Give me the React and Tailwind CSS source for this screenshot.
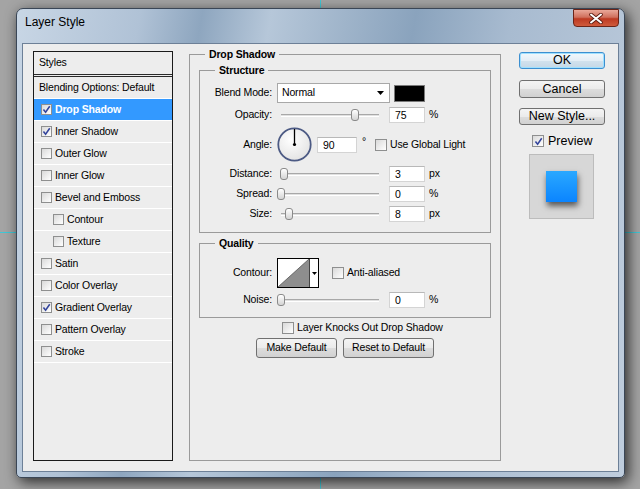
import React from "react"

const styleRows = [
  { label: "Drop Shadow", on: true, active: true },
  { label: "Inner Shadow", on: true },
  { label: "Outer Glow" },
  { label: "Inner Glow" },
  { label: "Bevel and Emboss" },
  { label: "Contour", sub: true },
  { label: "Texture", sub: true },
  { label: "Satin" },
  { label: "Color Overlay" },
  { label: "Gradient Overlay", on: true },
  { label: "Pattern Overlay" },
  { label: "Stroke" },
]

function Box({ on, className = "w-[11px] h-[11px]" }) {
  return (
    <span className={`${className} shrink-0 border border-[#8e8f8f] bg-[linear-gradient(135deg,#d9d9d9,#ffffff)] flex items-center justify-center`}>
      {on && (
        <svg viewBox="0 0 10 10" className="w-[9px] h-[9px]">
          <path d="M1.6 5 L4 8 L8.6 1.4" fill="none" stroke="#33449c" strokeWidth="1.7" />
        </svg>
      )}
    </span>
  )
}

function Slider({ v }) {
  return (
    <div className="relative w-[106px] h-[16px]">
      <div className="absolute left-[4px] right-[4px] top-[7px] h-[3px] border-t border-[#a8a8a8] border-b border-b-white bg-[#e0e0e0]" />
      <div
        className="absolute top-[2px] w-[8px] h-[12px] rounded-[3px] border border-[#8a8a8a] bg-gradient-to-b from-white to-[#d4d4d4]"
        style={{ left: Math.round(v * 0.98) }}
      />
    </div>
  )
}

function Field({ v }) {
  return (
    <div className="w-[36px] h-[16px] bg-white border border-[#d4d4d4] border-t-[#b8b8b8] pl-[5px] leading-[15px]">
      {v}
    </div>
  )
}

function SliderRow({ label, v, unit }) {
  return (
    <div className="flex items-center h-[16px]">
      <span className="w-[72px] text-right">{label}</span>
      <div className="ml-[5px]"><Slider v={v} /></div>
      <div className="ml-[6px]"><Field v={v} /></div>
      <span className="ml-[4px]">{unit}</span>
    </div>
  )
}

function Button({ children, className }) {
  return (
    <div className={`${className} flex items-center justify-center rounded-[3px] border border-[#707070] bg-[linear-gradient(#f4f4f4,#ebebeb_50%,#dddddd_51%,#d1d1d1)]`}>
      {children}
    </div>
  )
}

export default function App() {
  return (
    <div className="relative w-[640px] h-[489px] overflow-hidden bg-[#a4a4a4] pt-[8px] pl-[16px] font-['Liberation_Sans',Arial,sans-serif] text-[10.5px] tracking-[-0.15px] text-black">
      {/* guide lines */}
      <div className="absolute left-[320px] top-0 w-px h-full bg-[#3fc7d6]" />
      <div className="absolute left-0 top-[232px] w-full h-px bg-[#3fc7d6]" />

      {/* Window */}
      <div className="relative w-[609px] h-[470px] flex flex-col rounded-t-[7px] rounded-b-[5px] border border-[#3a4656] bg-[linear-gradient(100deg,#c8d6e5_0%,#b0c2d6_18%,#8ea6bf_27%,#b6c7d9_37%,#9fb4ca_48%,#8aa3bd_58%,#a8bbd0_72%,#bfcddd_100%)] shadow-[3px_4px_14px_rgba(0,0,0,0.75)]">
        {/* Title bar */}
        <div className="h-[34px] flex items-start justify-between">
          <span className="pl-[8px] pt-[6px] text-[12px] leading-[14px] tracking-normal">Layer Style</span>
          <div className="mr-[5px] w-[46px] h-[18px] rounded-b-[4px] border border-[#6b2418] bg-[linear-gradient(#e9a899,#d0705d_45%,#bd3a22_55%,#cf5a3c)] flex items-center justify-center">
            <svg viewBox="0 0 14 11" className="w-[14px] h-[11px]">
              <path d="M2 1.5 L12 9.5 M12 1.5 L2 9.5" stroke="#5a1a10" strokeWidth="3.6" strokeLinecap="round" />
              <path d="M2 1.5 L12 9.5 M12 1.5 L2 9.5" stroke="#ffffff" strokeWidth="2" strokeLinecap="round" />
            </svg>
          </div>
        </div>

        {/* Client area */}
        <div className="mx-[5px] h-[429px] border border-[#6d8097] bg-[#ededed] flex items-start pl-[10px] pt-[3px]">
          {/* Styles list */}
          <div className="mt-[4px] w-[140px] h-[410px] border border-[#1a1a1a] flex flex-col">
            <div className="h-[25px] flex items-center pl-[5px] border-b-[3px] border-double border-[#2a2a2a]">Styles</div>
            <div className="h-[22px] flex items-center pl-[5px] border-b border-white">Blending Options: Default</div>
            {styleRows.map((s) => (
              <div
                key={s.label}
                className={`h-[22px] flex items-center gap-[3px] border-b border-white ${s.sub ? "pl-[19px]" : "pl-[7px]"} ${s.active ? "bg-[#3399ff] text-white font-bold" : ""}`}
              >
                <Box on={s.on} />
                <span>{s.label}</span>
              </div>
            ))}
          </div>

          {/* Drop Shadow group */}
          <fieldset className="ml-[16px] w-[312px] h-[414px] border border-[#9a9a9a] px-[9px]">
            <legend className="ml-[6px] px-[4px] font-bold leading-[14px]">Drop Shadow</legend>

            <fieldset className="mt-[2px] border border-[#9a9a9a] pt-[6px] pb-[10px] flex flex-col gap-[4px]">
              <legend className="ml-[15px] px-[4px] font-bold leading-[14px]">Structure</legend>

              <div className="flex items-center h-[20px]">
                <span className="w-[72px] text-right">Blend Mode:</span>
                <div className="ml-[5px] w-[113px] h-[20px] bg-white border border-[#a8a8a8] flex items-center justify-between pl-[4px] pr-[5px]">
                  <span>Normal</span>
                  <svg viewBox="0 0 7 4" className="w-[7px] h-[4px]"><path d="M0 0 H7 L3.5 4 Z" fill="#000" /></svg>
                </div>
                <div className="ml-[4px] w-[31px] h-[17px] bg-black border border-[#7a7a7a]" />
              </div>

              <SliderRow label="Opacity:" v={75} unit="%" />

              <div className="flex items-center h-[35px]">
                <span className="w-[72px] text-right">Angle:</span>
                <svg viewBox="0 0 35 35" className="ml-[5px] w-[35px] h-[35px]">
                  <defs>
                    <radialGradient id="dial" cx="40%" cy="35%" r="70%">
                      <stop offset="0" stopColor="#ffffff" />
                      <stop offset="1" stopColor="#e2e2e2" />
                    </radialGradient>
                  </defs>
                  <circle cx="17.5" cy="17.5" r="16.2" fill="url(#dial)" stroke="#4c5a84" strokeWidth="1.8" />
                  <line x1="17.5" y1="17.5" x2="17.5" y2="2" stroke="#000" strokeWidth="1.3" />
                  <circle cx="17.5" cy="17.5" r="1.6" fill="#000" />
                </svg>
                <div className="ml-[5px] w-[40px] h-[16px] bg-white border border-[#d4d4d4] border-t-[#b8b8b8] pl-[5px] leading-[15px]">90</div>
                <span className="ml-[5px] -mt-[6px]">°</span>
                <div className="ml-[9px] flex items-center gap-[3px]">
                  <Box className="w-[12px] h-[12px]" />
                  <span>Use Global Light</span>
                </div>
              </div>

              <SliderRow label="Distance:" v={3} unit="px" />
              <SliderRow label="Spread:" v={0} unit="%" />
              <SliderRow label="Size:" v={8} unit="px" />
            </fieldset>

            <fieldset className="mt-[3px] border border-[#9a9a9a] pt-[8px] pb-[9px] flex flex-col gap-[4px]">
              <legend className="ml-[15px] px-[4px] font-bold leading-[14px]">Quality</legend>

              <div className="flex items-center h-[30px]">
                <span className="w-[72px] text-right">Contour:</span>
                <div className="ml-[5px] w-[42px] h-[30px] border border-black flex bg-white">
                  <svg viewBox="0 0 31 28" className="w-[31px] h-[28px]">
                    <polygon points="0,28 31,0 31,28" fill="#8e8e8e" />
                    <line x1="0" y1="28" x2="31" y2="0" stroke="#555" strokeWidth="0.8" />
                  </svg>
                  <div className="w-[9px] border-l border-[#444] flex items-center justify-center">
                    <svg viewBox="0 0 5 3" className="w-[5px] h-[3px]"><path d="M0 0 H5 L2.5 3 Z" fill="#000" /></svg>
                  </div>
                </div>
                <div className="ml-[13px] flex items-center gap-[3px]">
                  <Box className="w-[12px] h-[12px]" />
                  <span>Anti-aliased</span>
                </div>
              </div>

              <SliderRow label="Noise:" v={0} unit="%" />
            </fieldset>

            <div className="mt-[3px] h-[14px] flex items-center gap-[3px] pl-[83px]">
              <Box className="w-[12px] h-[12px]" />
              <span>Layer Knocks Out Drop Shadow</span>
            </div>

            <div className="mt-[3px] flex justify-center gap-[6px]">
              <Button className="w-[81px] h-[20px]">Make Default</Button>
              <Button className="w-[91px] h-[20px]">Reset to Default</Button>
            </div>
          </fieldset>

          {/* Right column */}
          <div className="ml-[18px] mt-[5px] w-[86px] flex flex-col text-[12.5px] tracking-normal">
            <div className="h-[17px] rounded-[3px] border border-[#3c8fd0] shadow-[inset_0_0_0_1px_#9fe0ff] bg-[linear-gradient(#f2f8fc,#e4eef6_50%,#d2e2ee_51%,#c6d8e6)] flex items-center justify-center">OK</div>
            <Button className="mt-[11px] h-[18px]">Cancel</Button>
            <Button className="mt-[10px] h-[17px]">New Style...</Button>
            <div className="mt-[9px] ml-[13px] h-[14px] flex items-center gap-[4px]">
              <Box on className="w-[12px] h-[12px]" />
              <span>Preview</span>
            </div>
            <div className="mt-[6px] ml-[10px] w-[65px] h-[65px] border border-[#bcbcbc] bg-[#d7d7d7] flex items-center justify-center">
              <div className="w-[31px] h-[31px] bg-gradient-to-b from-[#2aa8ff] to-[#0a84ff] shadow-[1px_4px_6px_rgba(0,0,0,0.6)]" />
            </div>
          </div>
        </div>
      </div>
    </div>
  )
}
